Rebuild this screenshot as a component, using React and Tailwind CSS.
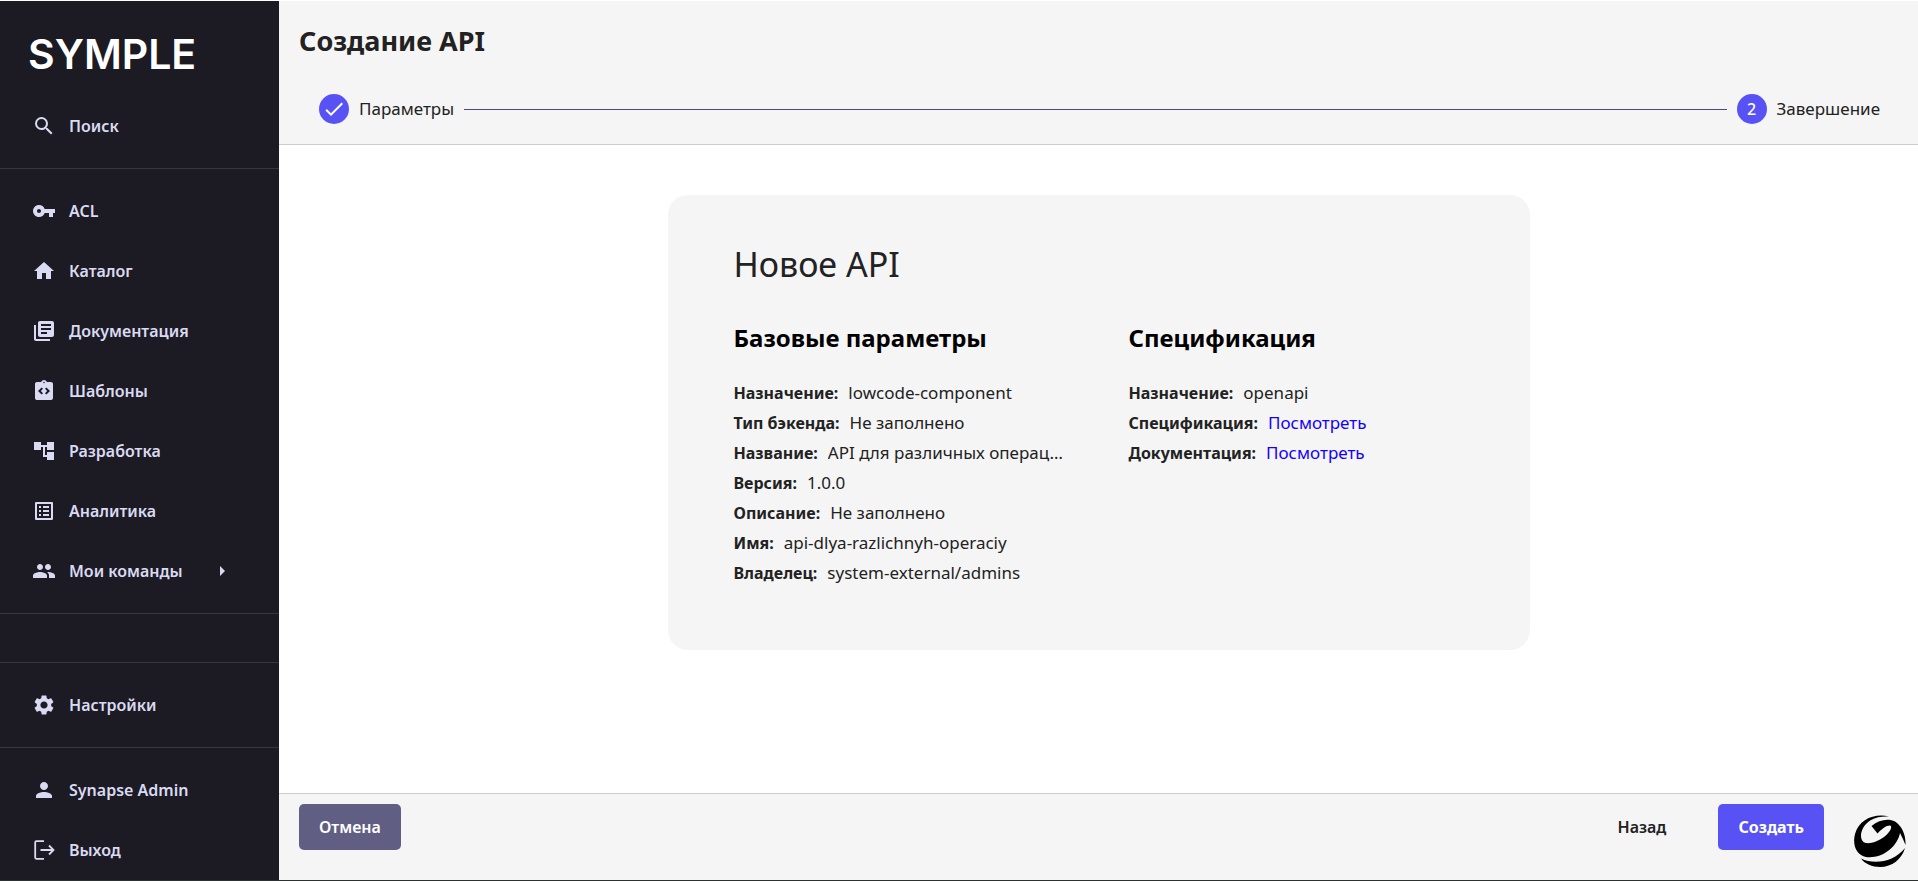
import {
  MdSearch, MdVpnKey, MdHome, MdLibraryBooks, MdIntegrationInstructions, MdAccountTree,
  MdListAlt, MdPeople, MdSettings, MdPerson, MdArrowRight, MdCheck,
} from "react-icons/md";

function ExitIcon({ size = 24, className }) {
  return (
    <svg width={size} height={size} className={className} viewBox="0 0 24 24" fill="none" stroke="currentColor" strokeWidth="1.8" aria-hidden="true">
      <path d="M12 3.2H4.4a1.2 1.2 0 0 0-1.2 1.2v15.2a1.2 1.2 0 0 0 1.2 1.2H12" />
      <path d="M8.500 12h13M17 7.500 21.500 12 17 16.500" />
    </svg>
  );
}

function Globe() {
  return (
    <svg className="size-[52px]" viewBox="0 0 52 52" aria-hidden="true">
      <path d="M35 1.500C21-2 5 4 1 19C-2 31 3 40 12 42C27 44 43 33 46 18C48 22 50 26 51.500 30C52 20 48 11 41 6.500C34 3 25 5 17.500 11L23.500 18.500C28 14 32 10.500 36 10.500C39 11 36 18 30 22C23 27 14 30 9.500 27C4 22 8 10 17 5C22 2 29 1 35 1.500Z" />
      <path d="M7 43.500C20 50 40 47 51 33C48 44 38 52 26 52C18 52 11 49 7 43.500Z" />
    </svg>
  );
}

function Logo() {
  return (
    <div className="flex h-[95px] items-center px-7 pt-3 font-['Inter',sans-serif] text-[41px] leading-none font-semibold text-white">
      SYMPLE
    </div>
  );
}

function Item({ icon: Icon, children, arrow }) {
  return (
    <li>
      <a href="#" className="flex h-[60px] items-center gap-[13px] px-8">
        <Icon size={24} className="shrink-0" />
        <span className="w-32 whitespace-nowrap">{children}</span>
        {arrow && <MdArrowRight size={24} className="shrink-0" />}
      </a>
    </li>
  );
}

function Group({ children }) {
  return <ul className="border-t border-[#35373a] py-3">{children}</ul>;
}

function Row({ label, children }) {
  return (
    <div className="flex h-[30px] items-baseline gap-[10px] leading-[30px]">
      <dt className="shrink-0 text-base/[30px] font-bold">{label}:</dt>
      <dd className="min-w-0 truncate">{children}</dd>
    </div>
  );
}

function Step({ mark, children }) {
  return (
    <li className="flex shrink-0 items-center gap-[10px]">
      <span className="flex size-[30px] items-center justify-center rounded-full bg-[#5852f5] text-base text-white">{mark}</span>
      {children}
    </li>
  );
}

export default function App() {
  return (
    <div className="flex min-h-screen border-t border-b border-t-white border-b-[#2b3330] bg-white font-['Noto_Sans',sans-serif] text-[17px] text-[#222]">
      <nav className="w-[279px] shrink-0 bg-[#1c1a23] text-base font-semibold text-[#dadaf2]">
        <Logo />
        <ul className="pb-3"><Item icon={MdSearch}>Поиск</Item></ul>
        <Group>
          <Item icon={MdVpnKey}>ACL</Item>
          <Item icon={MdHome}>Каталог</Item>
          <Item icon={MdLibraryBooks}>Документация</Item>
          <Item icon={MdIntegrationInstructions}>Шаблоны</Item>
          <Item icon={MdAccountTree}>Разработка</Item>
          <Item icon={MdListAlt}>Аналитика</Item>
          <Item icon={MdPeople} arrow>Мои команды</Item>
        </Group>
        <div className="h-[49px] border-t border-[#35373a]" />
        <Group><Item icon={MdSettings}>Настройки</Item></Group>
        <ul className="border-t border-[#35373a] pt-3">
          <Item icon={MdPerson}>Synapse Admin</Item>
          <Item icon={ExitIcon}>Выход</Item>
        </ul>
      </nav>

      <div className="flex min-w-0 grow flex-col">
        <header className="border-b border-[#ccc] bg-[#f5f5f5] px-5 pt-5 pb-5">
          <h1 className="text-[27px]/[40px] font-bold">Создание API</h1>
          <ol className="mt-[33px] flex items-center gap-[10px] pr-[18px] pl-5">
            <Step mark={<MdCheck size={24} />}>Параметры</Step>
            <li aria-hidden="true" className="h-px grow bg-[#4d4880]" />
            <Step mark={<span className="font-medium">2</span>}>Завершение</Step>
          </ol>
        </header>

        <main className="flex grow justify-center px-5 py-[50px]">
          <section className="w-[862px] self-start rounded-[20px] bg-[#f5f5f5] px-[66px] pt-[45px] pb-[62px]">
            <h2 className="text-[34px]/[48px]">Новое API</h2>
            <div className="mt-[30px] grid grid-cols-2 gap-x-[60px]">
              <div className="min-w-0">
                <h3 className="text-2xl/[40px] font-bold text-black">Базовые параметры</h3>
                <dl className="mt-5">
                  <Row label="Назначение">lowcode-component</Row>
                  <Row label="Тип бэкенда">Не заполнено</Row>
                  <Row label="Название">API для различных операц…</Row>
                  <Row label="Версия">1.0.0</Row>
                  <Row label="Описание">Не заполнено</Row>
                  <Row label="Имя">api-dlya-razlichnyh-operaciy</Row>
                  <Row label="Владелец">system-external/admins</Row>
                </dl>
              </div>
              <div className="min-w-0">
                <h3 className="text-2xl/[40px] font-bold text-black">Спецификация</h3>
                <dl className="mt-5">
                  <Row label="Назначение">openapi</Row>
                  <Row label="Спецификация"><a href="#" className="text-[#1400ff]">Посмотреть</a></Row>
                  <Row label="Документация"><a href="#" className="text-[#1400ff]">Посмотреть</a></Row>
                </dl>
              </div>
            </div>
          </section>
        </main>

        <footer className="relative flex h-[87px] items-start justify-between border-t border-[#ccc] bg-[#f5f5f5] pt-[10px] pr-[94px] pl-5 text-base font-semibold">
          <button type="button" className="h-[46px] rounded-[5px] bg-[#605e82] px-5 text-white">Отмена</button>
          <div className="flex gap-8">
            <button type="button" className="h-[46px] px-5">Назад</button>
            <button type="button" className="h-[46px] rounded-[5px] bg-[#5852f5] px-5 font-bold text-white">Создать</button>
          </div>
          <div className="absolute right-3 bottom-[13px] text-black"><Globe /></div>
        </footer>
      </div>
    </div>
  );
}
